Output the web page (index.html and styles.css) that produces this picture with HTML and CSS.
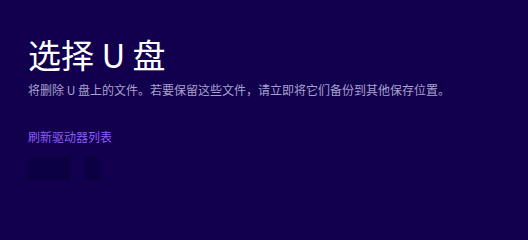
FILE: index.html
```html
<!DOCTYPE html>
<html lang="zh-CN">
<head>
<meta charset="utf-8">
<title>选择 U 盘</title>
<link rel="stylesheet" href="styles.css">
</head>
<body>
<main class="page">
  <h1 class="title">选择 U 盘</h1>
  <p class="desc">将删除 U 盘上的文件。若要保留这些文件，请立即将它们备份到其他保存位置。</p>
  <a class="refresh" href="#">刷新驱动器列表</a>
  <div class="drives">
    <div class="ghost ghost-wide"></div>
    <div class="ghost ghost-narrow"></div>
  </div>
</main>
</body>
</html>
```

FILE: styles.css
```css
html, body {
  margin: 0;
  padding: 0;
  background: #12004f;
}
body {
  min-height: 100vh;
}
.page {
  padding: 32px 0 0 28px;
  font-family: "Noto Sans CJK SC", "Noto Sans", sans-serif;
}
.title {
  margin: 0;
  font-size: 33px;
  font-weight: 400;
  line-height: 44px;
  color: #ffffff;
}
.desc {
  margin: 6px 0 0 0;
  font-size: 12px;
  line-height: 16px;
  color: #a8a2cc;
}
.refresh {
  display: inline-block;
  margin-top: 31px;
  font-size: 12px;
  line-height: 16px;
  color: #8d5cf6;
  text-decoration: none;
}
.drives {
  display: flex;
  gap: 15px;
  margin-top: 10px;
}
.ghost {
  height: 23px;
  background: #0d0042;
}
.ghost-wide { width: 42px; }
.ghost-narrow { width: 15px; }
```
